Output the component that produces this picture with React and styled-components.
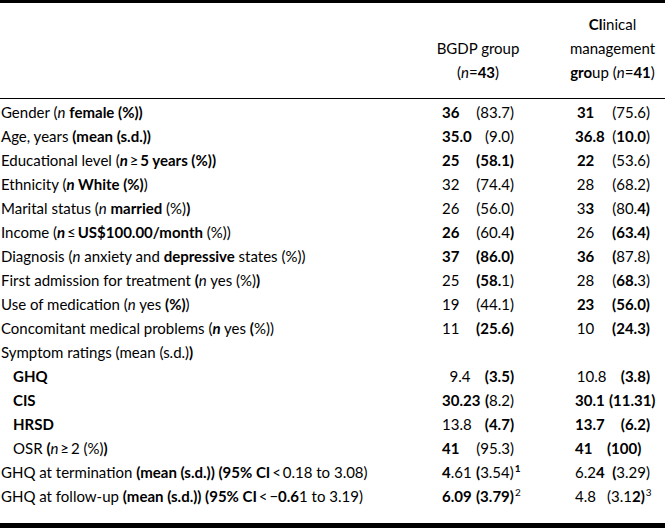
import React from 'react';
import styled, { createGlobalStyle, css } from 'styled-components';

const GlobalStyle = createGlobalStyle`
  html, body {
    margin: 0;
    padding: 0;
    background: #fff;
  }
  body {
    font-family: Lato, "Open Sans", "Liberation Sans", sans-serif;
    font-size: 15px;
    color: #000;
  }
`;

const COLS = '1fr 34px 38px 61px 32px 43px 15px';

const Table = styled.div`
  width: 665px;
  height: 528px;
  box-sizing: border-box;
  border-top: 3px solid #000;
  border-bottom: 5px solid #000;
  display: flex;
  flex-direction: column;
`;

const Head = styled.div`
  display: grid;
  grid-template-columns: ${COLS};
  align-items: end;
  padding: 9px 0 14px;
  border-bottom: 1px solid #000;
  line-height: 24px;
`;

const HeadCell = styled.div`
  grid-column: ${(p) => p.$col};
  display: flex;
  flex-direction: column;
  align-items: center;
  white-space: nowrap;
`;

const Body = styled.div`
  padding-top: 1px;
`;

const Row = styled.div`
  display: grid;
  grid-template-columns: ${COLS};
  align-items: center;
  height: 24px;
  line-height: 24px;
  white-space: nowrap;
`;

const Label = styled.div`
  padding-left: ${(p) => (p.$indent ? 13 : 1)}px;
`;

const Num = styled.div`
  grid-column: ${(p) => p.$col};
  text-align: left;
`;

const Paren = styled.div`
  grid-column: ${(p) => p.$col};
  text-align: ${(p) => p.$align || 'right'};
`;

const Seg = styled.span`
  font-weight: ${(p) => (p.$b ? 700 : 400)};
  font-style: ${(p) => (p.$i ? 'italic' : 'normal')};
  ${(p) =>
    p.$sup &&
    css`
      font-size: 10px;
      vertical-align: 6px;
      line-height: 0;
      margin-left: 1px;
    `}
`;

// * toggles bold, _ toggles italic, ^ toggles superscript
const rich = (str) => {
  const out = [];
  let b = false;
  let i = false;
  let s = false;
  let buf = '';
  const flush = () => {
    if (buf) {
      out.push(
        <Seg key={out.length} $b={b} $i={i} $sup={s}>
          {buf}
        </Seg>
      );
      buf = '';
    }
  };
  for (const ch of str) {
    if (ch === '*') { flush(); b = !b; }
    else if (ch === '_') { flush(); i = !i; }
    else if (ch === '^') { flush(); s = !s; }
    else buf += ch;
  }
  flush();
  return out;
};

const rows = [
  { label: 'Gender (_n_ *female (%))*', b: ['*36*', '(83.7)'], c: ['\u2009*31*', '(75.6)'] },
  { label: 'Age, years *(mean (s.d.))*', b: ['*35.0*', '(9.0)'], c: ['*36.8*', '(*10.0*)'] },
  { label: 'Educational level (*_n_*\u2009\u2265\u2009*5 years (%))*', b: ['*25*', '*(58.1)*'], c: ['\u2009*22*', '(53.6)'] },
  { label: 'Ethnicity (*_n_ White (%)*)', b: ['32', '(74.4)'], c: ['\u200928', '(68.2)'] },
  { label: 'Marital status (_n_ *married* (%)*)*', b: ['26', '(56.0)'], c: ['\u20093*3*', '(80.*4)*'] },
  { label: 'Income (*_n_*\u2009\u2264\u2009*US$100.00/month* (%))', b: ['*26*', '(60.4*)*'], c: ['\u200926', '*(63.4)*'] },
  { label: 'Diagnosis (_n_ anxiety and *depressive* states (%))', b: ['*37*', '*(86.0)*'], c: ['\u2009*36*', '*(*87.8)'] },
  { label: 'First admission for treatment *(*_n_ yes (%)*)*', b: ['25', '*(58.*1)'], c: ['\u200928', '(*68.*3)'] },
  { label: 'Use of medication (_n_ yes *(%)*)', b: ['19', '(44.1)'], c: ['\u2009*23*', '*(56.0)*'] },
  { label: 'Concomitant medical problems (*_n_* yes *(*%))', b: ['11', '*(25.6)*'], c: ['\u200910', '*(24.3)*'] },
  { label: 'Symptom ratings (mean (s.d.)*)*' },
  { label: '*GHQ*', indent: true, b: ['\u20029.4', '*(3.5)*'], c: ['\u200910.8', '*(3.8)*'] },
  { label: '*CIS*', indent: true, b: ['*30.23*', '*(*8.2)'], c: ['*30.1*', '\u2009*(11.31)*'], cAlign: 'left' },
  { label: '*HRSD*', indent: true, b: ['13.8', '*(4.7)*'], c: ['*13.7*', '*(6.2)*'] },
  { label: 'OSR *(*_n_\u2009\u2265\u20092 (%)*)*', indent: true, b: ['*41*', '(95.3)'], c: ['*41*', '*(100)*'], cAlign: 'left' },
  {
    label: 'GHQ at termination *(mean (s.d.)) (95% CI*\u2009<\u20090.18 to 3.08)',
    b: ['*4*.61', '*(*3.54)*^1^*'],
    c: ['6.2*4*', '*(*3.29)'],
  },
  {
    label: 'GHQ at follow-up *(mean (s.d.)) (95% CI*\u2009<\u2009\u2212*0.6*1 to 3.19)',
    b: ['*6.09*', '*(3.79)*^2^'],
    c: ['4.8', '(3.1*2)*^3^'],
  },
];

const App = () => (
  <>
    <GlobalStyle />
    <Table>
      <Head>
        <HeadCell $col="2 / 4">
          <span>{rich('BGDP group')}</span>
          <span>{rich('(_n_=*43*)')}</span>
        </HeadCell>
        <HeadCell $col="5 / 7">
          <span>{rich('*Cl*inical')}</span>
          <span>{rich('management')}</span>
          <span>{rich('*gro*up (_n_=*41*)')}</span>
        </HeadCell>
      </Head>
      <Body>
        {rows.map((r, idx) => (
          <Row key={idx}>
            <Label $indent={r.indent}>{rich(r.label)}</Label>
            {r.b && (
              <>
                <Num $col={2}>{rich(r.b[0])}</Num>
                <Paren $col={3}>{rich(r.b[1])}</Paren>
                <Num $col={5}>{rich(r.c[0])}</Num>
                <Paren $col={6} $align={r.cAlign}>{rich(r.c[1])}</Paren>
              </>
            )}
          </Row>
        ))}
      </Body>
    </Table>
  </>
);

export default App;
